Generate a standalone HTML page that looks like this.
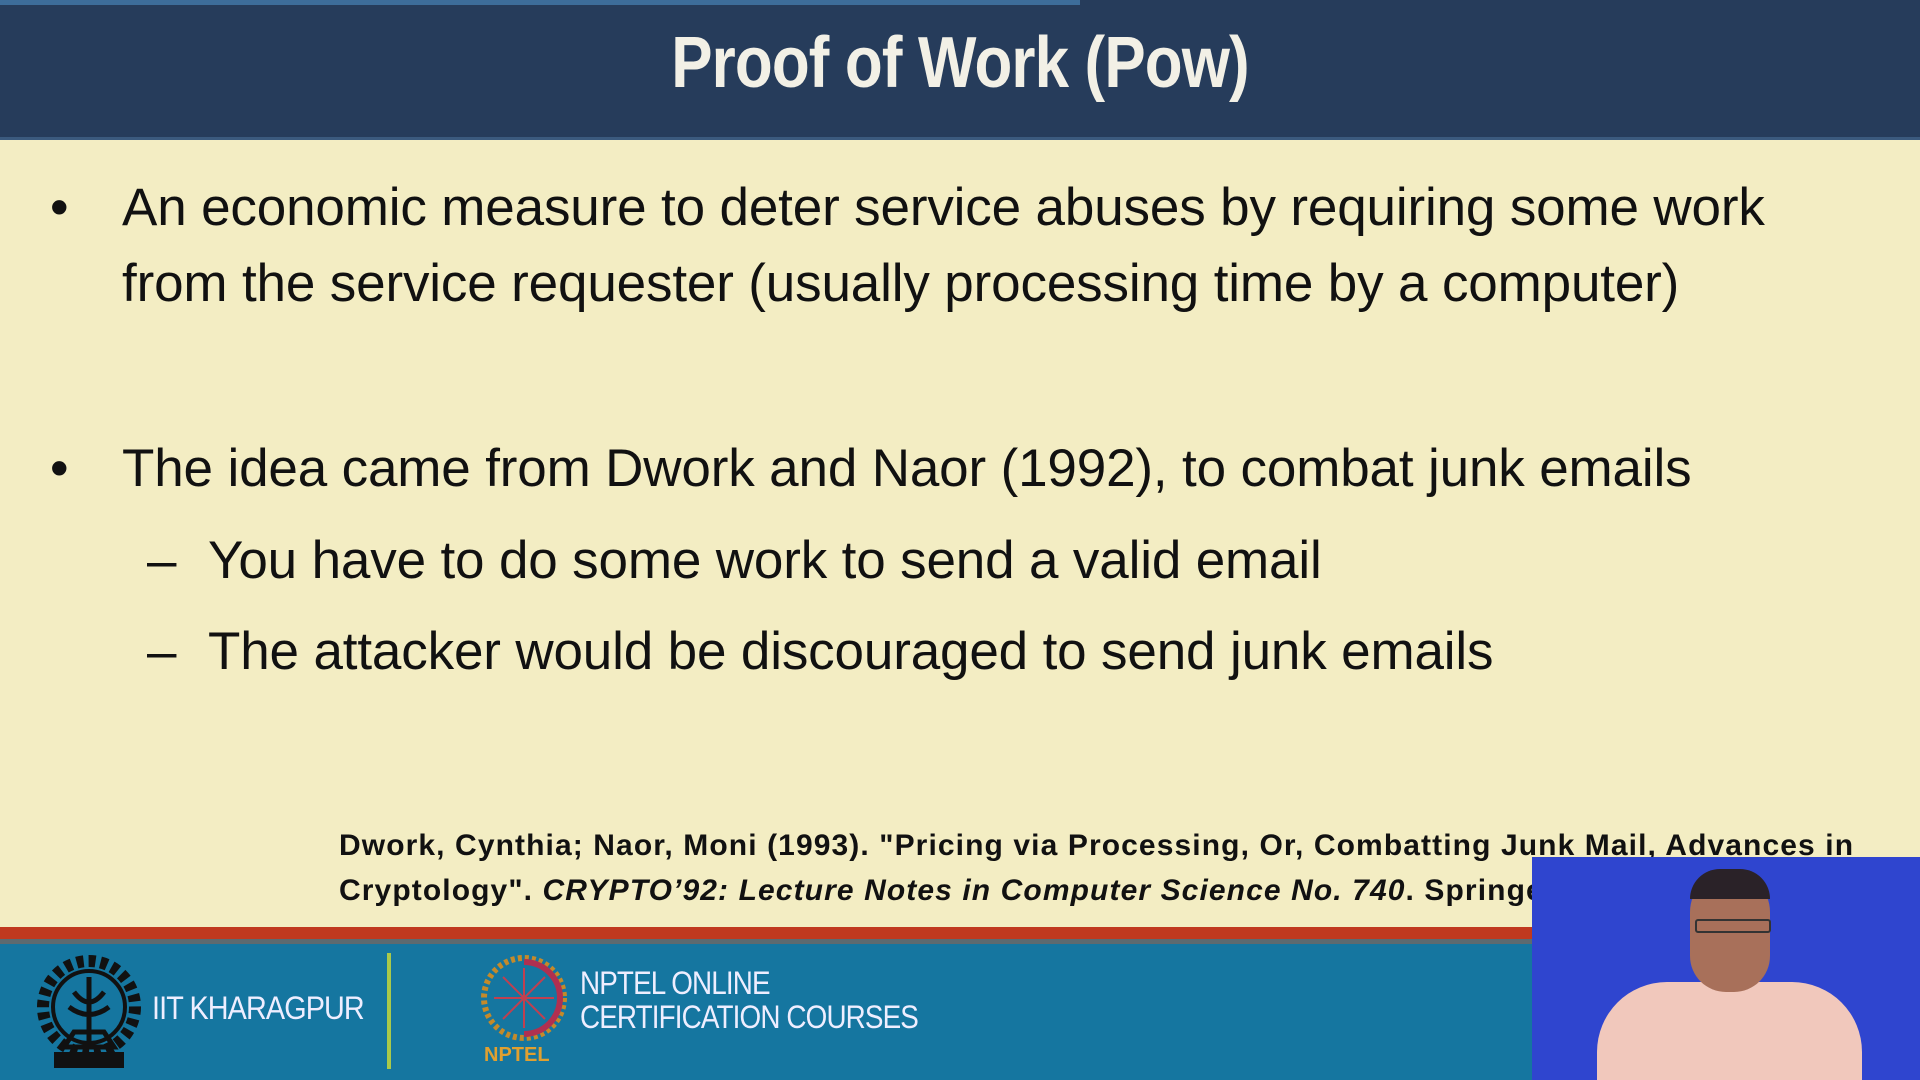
<!DOCTYPE html>
<html><head><meta charset="utf-8"><style>
body{margin:0;width:1920px;height:1080px;overflow:hidden;background:#f3edc3;font-family:"Liberation Sans",sans-serif;position:relative}
div,span{position:absolute}
.hdr{left:0;top:0;width:1920px;height:137px;background:#263c5b;border-bottom:3px solid #3b5a7e}
.strip{left:0;top:0;width:1080px;height:5px;background:#3d6d9a}
.title{left:0;width:1920px;top:22px;text-align:center;color:#f2f0e6;font-size:72px;font-weight:bold;transform:scaleX(0.86);letter-spacing:-1px}
.t{color:#111;font-size:53px;white-space:nowrap;letter-spacing:-0.15px}
.ref{color:#111;font-size:30px;font-weight:bold;white-space:nowrap;letter-spacing:1.1px}
</style></head><body>
<div class="hdr"></div><div class="strip"></div>
<div class="title">Proof of Work (Pow)</div>
<div class="t" style="left:50px;top:177px">•</div>
<div class="t" style="left:122px;top:177px">An economic measure to deter service abuses by requiring some work</div>
<div class="t" style="left:122px;top:253px">from the service requester (usually processing time by a computer)</div>
<div class="t" style="left:50px;top:438px">•</div>
<div class="t" style="left:122px;top:438px">The idea came from Dwork and Naor (1992), to combat junk emails</div>
<div class="t" style="left:147px;top:530px">–</div>
<div class="t" style="left:208px;top:530px">You have to do some work to send a valid email</div>
<div class="t" style="left:147px;top:621px">–</div>
<div class="t" style="left:208px;top:621px">The attacker would be discouraged to send junk emails</div>
<div class="ref" style="left:339px;top:829px">Dwork, Cynthia; Naor, Moni (1993). "Pricing via Processing, Or, Combatting Junk Mail, Advances in</div>
<div class="ref" style="left:339px;top:874px">Cryptology". <i>CRYPTO’92: Lecture Notes in Computer Science No. 740</i>. Springer</div>
<div style="left:0;top:927px;width:1920px;height:12px;background:#c0391f"></div>
<div style="left:0;top:939px;width:1920px;height:5px;background:#5c6a70"></div>
<div style="left:0;top:944px;width:1920px;height:136px;background:#1576a0"></div>
<svg style="position:absolute;left:34px;top:952px" width="110" height="122" viewBox="0 0 110 122">
<circle cx="55" cy="55" r="46" fill="none" stroke="#111" stroke-width="12" stroke-dasharray="7 5"/>
<circle cx="55" cy="55" r="36" fill="none" stroke="#111" stroke-width="4"/>
<path d="M55 25 V95 M40 40 Q55 60 70 40 M35 55 Q55 70 75 55 M30 95 H80 L70 80 H40 Z" stroke="#111" stroke-width="5" fill="none"/>
<rect x="20" y="100" width="70" height="16" fill="#111"/>
</svg>
<div style="left:152px;top:990px;color:#eef;font-size:32px;transform:scaleX(0.9);transform-origin:left;letter-spacing:-1px">IIT KHARAGPUR</div>
<div style="left:387px;top:953px;width:4px;height:116px;background:#a9c94a"></div>
<svg style="position:absolute;left:478px;top:948px" width="92" height="100" viewBox="0 0 92 100">
<circle cx="46" cy="50" r="40" fill="none" stroke="#c48a2a" stroke-width="6" stroke-dasharray="4 3"/>
<path d="M46 14 A36 36 0 0 1 46 86" fill="none" stroke="#b03050" stroke-width="6"/>
<path d="M46 20V80M16 50H76M25 29L67 71M67 29L25 71" stroke="#c04050" stroke-width="2"/>
</svg>
<div style="left:484px;top:1044px;color:#e0a030;font-size:20px;font-weight:bold">NPTEL</div>
<div style="left:580px;top:966px;color:#eef;font-size:32px;line-height:34px;transform:scaleX(0.87);transform-origin:left;letter-spacing:-1px">NPTEL ONLINE<br>CERTIFICATION COURSES</div>
<div style="left:1532px;top:857px;width:388px;height:223px;background:#2f45cf;overflow:hidden">
<div style="left:65px;top:125px;width:265px;height:130px;background:#f1c8bc;border-radius:70px 70px 0 0"></div>
<div style="left:158px;top:15px;width:80px;height:120px;background:#a8705a;border-radius:40px 40px 36px 36px"></div>
<div style="left:158px;top:12px;width:80px;height:30px;background:#2a2228;border-radius:40px 40px 0 0"></div>
<div style="left:163px;top:62px;width:72px;height:10px;border:2px solid #333;border-radius:3px"></div>
</div>
</body></html>
